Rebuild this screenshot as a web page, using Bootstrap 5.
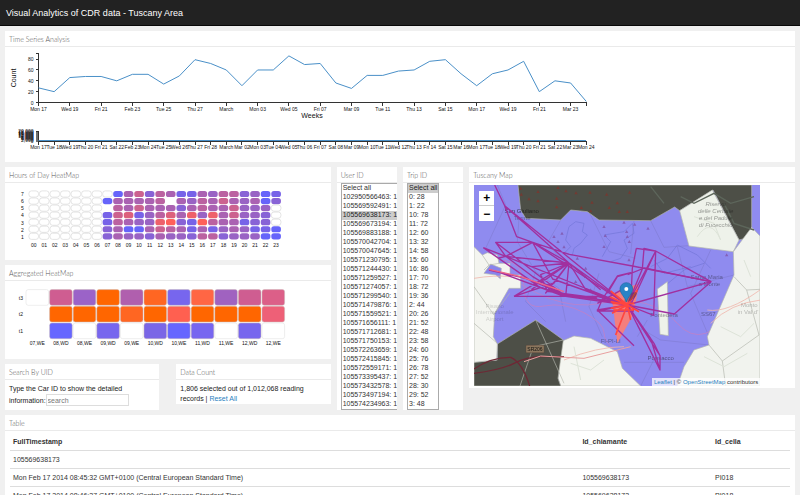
<!DOCTYPE html>
<html lang="en">
<head>
<meta charset="utf-8">
<meta name="viewport" content="width=device-width, initial-scale=1">
<title>Visual Analytics of CDR data - Tuscany Area</title>
<link href="https://cdn.jsdelivr.net/npm/bootstrap@5.3.0/dist/css/bootstrap.min.css" rel="stylesheet">
<style>
  html { scrollbar-width: none; }
  body { font: 7px/9px "Liberation Sans", Arial, sans-serif; color: #333; background: #f0f0f0; }
  .topbar { background: #222; border-bottom: 1px solid #080808; height: 26px; padding: 0 6px; }
  .topbar h1 { font-size: 9px; line-height: 12px; color: #fff; }
  .page { padding: 5px 5px 0; }
  .page .row { --bs-gutter-x: 6px; }
  .stack { gap: 5px; }
  .pair { gap: 17px; }
  .panel { background: #fff; }
  .panel > h2 { font: 300 7px/15px Lato, "Liberation Sans", sans-serif; color: #555; border-bottom: 1px solid #eaeaea; padding: 1px 4px 0; margin: 0; height: 16px; white-space: nowrap; }
  .panel-text { padding: 4px 4px 0; line-height: 10px; color: #222; }
  .panel svg { display: block; max-width: 100%; }
  svg text { font-family: "Liberation Sans", Arial, sans-serif; fill: #111; }
  .axis { fill: none; stroke: #333; stroke-width: 1; shape-rendering: crispEdges; }
  .tiny { font-size: 5px; }
  .pick { overflow: hidden; padding: 0 0 0 4px; }
  .pick select { display: block; font: inherit; color: #333; border: 1px solid #aaa; background: #fff; padding: 0; overflow: hidden; border-radius: 0; height: auto; scrollbar-width: none; }
  .pick option { padding: 0 1px; line-height: 9px; min-height: 9px; }
  .pick option.chosen { background: #ccc; color: #222; }
  #users { width: 66px; }
  #trips { width: 32px; }
  #uid { font: inherit; line-height: 9px; height: 12px; width: 83px; padding: 0 1px; border: 1px solid #ddd; background: #fff; border-radius: 0; }
  #uid::placeholder { color: #777; opacity: 1; }
  a { color: #2a7fc0; text-decoration: none; }
  .map-box { position: relative; width: 286px; max-width: 100%; margin: 2px 5px; }
  .zoomer { position: absolute; left: 5px; top: 6px; width: 15px; background: #fff; border-radius: 1px; overflow: hidden; }
  .zoomer button { display: block; width: 15px; height: 15px; border: 0; border-bottom: 1px solid #ccc; background: #fff; padding: 0; color: #000; font: bold 12px/14px "Liberation Sans", sans-serif; }
  .zoomer button:last-child { border-bottom: 0; }
  .credit { position: absolute; right: 0; bottom: 0; font-size: 6px; line-height: 8px; padding: 0 2px; background: rgba(255,255,255,.75); white-space: nowrap; }
  .table-wrap { padding: 0 5px; }
  .records { font-size: 7px; margin: 0; color: #333; --bs-table-bg: #fff; }
  .records > :not(caption) > * > * { padding: 4px 3px; line-height: 9px; border-bottom: 1px solid #ddd; color: #333; }
  .records > thead > tr > th { padding-top: 6px; }
  .c-time { width: 73%; }
  .c-id { width: 17%; }
</style>
</head>
<body>
<header class="topbar d-flex align-items-center"><h1 class="m-0 fw-normal">Visual Analytics of CDR data - Tuscany Area</h1></header>
<main class="container-fluid page d-flex flex-column stack">
  <section class="panel">
    <h2>Time Series Analysis</h2>
    <svg id="series" viewBox="5 47 600 115" width="600" height="115" role="img" aria-label="Readings per day"></svg>
  </section>

  <div class="row">
    <div class="col-5 d-flex flex-column stack">
      <section class="panel">
        <h2>Hours of Day HeatMap</h2>
        <svg id="hours" viewBox="5 183 300 77" width="300" height="77" role="img" aria-label="Readings per hour and weekday"></svg>
      </section>
      <section class="panel">
        <h2>Aggregated HeatMap</h2>
        <svg id="agg" viewBox="5 281 300 78" width="300" height="78" role="img" aria-label="Aggregated readings"></svg>
      </section>
      <div class="d-flex pair align-items-start">
        <section class="panel flex-fill w-50 pb-1">
          <h2>Search By UID</h2>
          <div class="panel-text"><label for="uid" class="d-inline">Type the Car ID to show the detailed information:</label><input id="uid" type="text" placeholder="search"></div>
        </section>
        <section class="panel flex-fill w-50">
          <h2>Data Count</h2>
          <div class="panel-text">1,806 selected out of 1,012,068 reading records | <a href="#">Reset All</a></div>
        </section>
      </div>
    </div>
    <div class="col-1">
      <section class="panel">
        <h2><label for="users">User ID</label></h2>
        <div class="pick"><select id="users" multiple size="25"></select></div>
      </section>
    </div>
    <div class="col-1">
      <section class="panel">
        <h2><label for="trips">Trip ID</label></h2>
        <div class="pick"><select id="trips" multiple size="25"></select></div>
      </section>
    </div>
    <div class="col-5">
      <section class="panel">
        <h2>Tuscany Map</h2>
        <div class="d-flex">
        <div class="map-box">
          <svg viewBox="30 75 858 603" width="286" height="201" role="img" aria-label="Map of trips near Pontedera">
            <rect x="30" y="75" width="858" height="603" fill="#8f8bef"/>
            <g fill="none" stroke="#7476d8" stroke-width="3" opacity=".7">
              <path d="M300 280l20-20-15-20 10-40 20-15 25 5-5 25 15 10-20 25-20 15-5 20zM415 290l25-45-20-20 60-10 25-25 5 30-30 20 10 25-20 30-30 10M560 320l50-25 30-40 60 30 40 40M600 380l60-50 60-20M570 300l30 40 80-20"/>
            </g>
            <g fill="none" stroke="#7774c4" stroke-width="1.5" opacity=".8">
              <path d="M100 75l25 60-60 130M165 175l-5 70 55 90-30 90 60 60M215 335l70 50 20 100M290 180l-40 70 60 70M375 155l60 120 80 20M405 340l-30 100 40 90M510 182l-10 100M560 182l40 80 75-5M640 260l30 120 140-35M740 270l-60 130 55 130M520 500l70 40 145 15M480 607h180M530 678l40-80M550 480l-30 50"/>
            </g>
            <g fill="none" stroke="#b783cf" stroke-width="3"><path d="M120 300q60 10 60 80t60 58 120 20 60 60 40 60M90 310q170 150 320 120t230 60 180-60"/></g>
            <g stroke="#b3b6ad" stroke-width="2">
              <path fill="#4d4f47" d="M162 75l8 75 15 25 105 5 30-30 50 5 35 25 155 2 72-41 15 11 100-62 78 150 38-10V75z"/>
              <path fill="#eef2ea" d="M647 152l98-62 80 150-17 35-133-17z"/>
              <path fill="#f1f3ee" d="M808 275l55-73 25 26v450H640l20-58 30-50 45-15-5-25 80-185z"/>
              <path fill="#f4f5f0" d="M290 545l40-17 50 7 80 40 15 50 55 53H290l-8-23z"/>
              <path fill="#4d4f47" d="M30 607l70-7v-48l115-72 83 60-16 115 8 23H30z"/>
              <path fill="#f4f5f0" d="M30 260l25 25 15-7 30 7 5 25h33v35h32v40h-35l-43 75-4 70 12 22-2 48-68 7z"/>
              <path fill="#8884ec" d="M60 340l20-28 32 13-3 31-14-11z"/>
              <path fill="#eef2ea" d="M580 387l30-22 3 162-25-4z"/>
              <path fill="none" d="M55 285l20 30 30-5M75 315l-15 15M30 380l60 85M92 460l45-60M30 490l70 60M810 350l38 40 40-2M848 390l37 135-110 78-40-48M775 603l10 75M215 480l85 190M298 540l-90 20-40 118"/>
            </g>
            <g fill="none" stroke="#f0b5ab" stroke-width="3" opacity=".8"><path d="M30 355q60-10 110-5M300 600q100-40 180-40M730 450q60 10 158-60M740 490q60-60 150-70"/></g>
            <g fill="none" stroke="#dde3d8" stroke-width="3"><path d="M690 170l60 20 20 50M700 230q40-60 70 10M320 610l60 20 40-30M330 560l20 100M770 500l60 30 40-40M720 590l60 30 70-40M840 300l20 50"/></g>
            <g fill="none" stroke="#5d665b" stroke-width="4"><path d="M650 110l40 20 60-30 50 30 70-20M780 130l30 60 60 20M560 80l40 50"/></g>
            <g fill="none" stroke="#6e2835" stroke-width="4"><path d="M30 640q80-10 120-30t80-20 70 0M30 627q50-35 110-35 35 15 57 86"/></g>
            <path fill="none" stroke="#e8a0a0" stroke-width="3" d="M180 605l50-17 130 7 140-35"/>
            <path id="trees" fill="#743a32"/>
            <path id="dots" fill="#8360b8"/>
            <g font-size="18" text-anchor="middle" opacity=".7">
              <g style="font-style:italic" opacity=".6"><text x="755" y="137">Riserva</text><text x="755" y="159">delle Cerbaie</text><text x="755" y="180">e del Padule</text><text x="755" y="202">di Fucecchio</text></g>
              <text x="173" y="160">San Giuliano</text><text x="175" y="181" opacity=".6">Terme</text>
              <text x="728" y="357" opacity=".6">Santa Maria</text><text x="736" y="378" opacity=".6">a Monte</text>
              <text x="733" y="468" opacity=".6">SS67</text><text x="600" y="472" opacity=".6">Pontedera</text>
              <text x="590" y="600" opacity=".7">Ponsacco</text><text x="440" y="549" opacity=".6">FI-PI-LI</text>
              <text x="856" y="440" opacity=".4">Monto</text><text x="852" y="461" opacity=".4">in Val d'</text>
              <g opacity=".25"><text x="92" y="445">Pisano</text><text x="92" y="463">Internazionale</text><text x="92" y="482">Airport</text></g>
            </g>
            <rect x="186" y="556" width="54" height="22" rx="2" fill="#8b765d" stroke="#5b3c32"/><text x="213" y="573" font-size="15" text-anchor="middle">SR206</text>
            <path fill="#ff7c70" fill-opacity=".9" d="M443 403l37-18 43-13-2 25-15 70-46 83z"/>
            <g fill="none" stroke="#a1309f" stroke-width="4" stroke-linejoin="round">
              <path d="M92 75l30 62 368 298M122 137l36 93 48 17L95 247l30 42 190 20-193-172 193 172 175 126M58 263l67 26 365 146M125 289l365 146M125 289l80 60 100 60 185 26M125 289l81-42 109 62-10 100M206 247l60 110 220 78M315 309l-70 90 70-90 50 80 125 46M315 309l-85 35 20 50 150 20M58 263l172 120 80 20 180 30M95 247l210 162M315 309l-113 80M150 409l165-100M150 409l120-40 45-60M125 289l-20 5M75 330l110 25 120 50 185 25M108 338l190 70M150 409l250 0 90 26M205 320l110-11 95 80M206 247l110 36 189 35 236 47"/>
              <path d="M206 247l284 188M500 338l-40 10-45 70-15 35 90-18M430 400l30-50 42-12M400 453l110 0M490 435L400 450l110 107M490 435l45-108 5-62 33 8M517 265l58 8-75 162M517 265l-12 60-5 110M575 273l-6 193-79-31M575 273l166 92-251 70M575 273l-85 162M541 324l200 41-110 97-141-27M541 324l-50 20M741 365l-110 97M490 435l98 195v-43l-98-152M490 435l70 100 28 95-70-140M490 435l80 115 18 37M490 435l79 31M400 430l90-50"/>
            </g>
            <g fill="none" stroke="#ff453f" stroke-width="5">
              <path d="M490 435l-50-42M490 435l-52-24M490 435l-50-10M490 435l-50 10M490 435l-46 25M490 435l10 45M490 435l-35 90M490 435l30-45M490 435l35 20M445 430h65M448 450h62"/>
            </g>
            <path fill="none" stroke="#ee6788" stroke-width="4" d="M75 328l95 22 130 45"/>
            <ellipse cx="500" cy="411" rx="22" ry="9" fill="#333" opacity=".35" transform="rotate(-35 500 411)"/>
            <path fill="#2a83c6" stroke="#216ba5" stroke-width="2" d="M487 426c-4-15-19-25-19-39a19 19 0 0 1 38 0c0 14-15 24-19 39z"/>
            <circle cx="487" cy="387" r="6" fill="#fff"/>
          </svg>
          <div class="zoomer"><button type="button" aria-label="Zoom in">+</button><button type="button" aria-label="Zoom out">−</button></div>
          <div class="credit"><a href="#">Leaflet</a> | © <a href="#">OpenStreetMap</a> contributors</div>
        </div>
        </div>
      </section>
    </div>
  </div>

  <section class="panel">
    <h2>Table</h2>
    <div class="table-wrap">
      <table class="table records">
        <thead><tr><th class="c-time">FullTimestamp</th><th class="c-id">Id_chiamante</th><th>Id_cella</th></tr></thead>
        <tbody>
          <tr><td colspan="3">105569638173</td></tr>
          <tr><td>Mon Feb 17 2014 08:45:32 GMT+0100 (Central European Standard Time)</td><td>105569638173</td><td>PI018</td></tr>
          <tr><td>Mon Feb 17 2014 08:46:27 GMT+0100 (Central European Standard Time)</td><td>105569638173</td><td>PI018</td></tr>
        </tbody>
      </table>
    </div>
  </section>
</main>
<script src="https://cdn.jsdelivr.net/npm/bootstrap@5.3.0/dist/js/bootstrap.bundle.min.js"></script>
<script>
  const byId = id => document.getElementById(id);
  const label = (x, y, t, anchor = 'middle', cls = 'tiny') => `<text class="${cls}" x="${x}" y="${y}" text-anchor="${anchor}">${t}</text>`;

  // Daily counts, 17 February to 24 March
  const counts = [27,20,46,48,48,40,52,52,34,49,79,72,60,31,60,60,86,70,72,36,26,50,50,58,60,76,79,53,31,53,60,76,20,40,36,2];
  const names = ['Sun','Mon','Tue','Wed','Thu','Fri','Sat'];
  const days = counts.map((_, i) => {
    const d = new Date(2014, 1, 17 + i), n = String(d.getDate()).padStart(2, '0');
    if (d.getDate() === 1) return 'March';
    return (d.getDay() === 0 ? (d.getMonth() === 1 ? 'Feb' : 'Mar') : names[d.getDay()]) + ' ' + n;
  });
  const x = i => 38.5 + i * 15.65, y = v => 102.5 - v * 0.542;
  let s = `<path class="axis" d="M35.5 53.5H38.5V102.5H586.5V105.5M35.5 131.5H38.5V141.5H586.5V144.5"/>`;
  for (let v = 0; v <= 80; v += 20) s += `<path class="axis" d="M35.5 ${Math.floor(y(v)) + .5}h3"/>` + label(33.5, y(v) + 2, v, 'end');
  for (let v = 0; v <= 10; v++) s += `<path class="axis" stroke-opacity=".7" d="M35.5 ${141.5 - v}h3"/>` + label(33.5, 143 - v, v ? (v * 2) + ',000' : 0, 'end');
  days.forEach((d, i) => {
    if (i % 2 === 0) s += `<path class="axis" d="M${x(i)} 102.5v3"/>` + label(x(i), 111, d);
    s += `<path class="axis" d="M${x(i)} 141.5v3"/>` + label(x(i), 149, d);
  });
  s += `<polyline fill="none" stroke="#4a90c8" stroke-width="1" points="${counts.map((v, i) => x(i) + ',' + y(v)).join(' ')}"/>`;
  s += `<path stroke="#4a90c8" d="M38.5 140.5H586"/>`;
  s += `<text font-size="7" x="312" y="118" text-anchor="middle">Weeks</text><text font-size="7" text-anchor="middle" transform="translate(16 78) rotate(-90)">Count</text>`;
  byId('series').innerHTML = s;

  // Weekday rows 7..1, hours 07..23; a dot is an empty cell, a blank is a missing one
  const grid = [
    '.0462541143552301',
    '044445 4354643402',
    ' 546444245446333.',
    '1671357483846332.',
    '1543389219544122.',
    '24004654141343110',
    '24332433255233300'];
  const tint = n => { const t = n / 9; return `rgb(${102 + 153 * t | 0},${100 - 3 * t | 0},${250 - 160 * t | 0})`; };
  s = '';
  grid.forEach((row, r) => {
    const cy = 194 + r * 7.05, cells = '.'.repeat(7) + row;
    s += label(22.5, cy + 2.3, 7 - r);
    [...cells].forEach((c, i) => {
      if (c === ' ') return;
      s += `<rect x="${28.9 + i * 10.54}" y="${cy - 3.1}" width="9.6" height="6.2" rx="2.6" fill="${c === '.' ? '#fff' : tint(+c)}" stroke="${c === '.' ? '#ddd' : 'none'}" stroke-width=".8"/>`;
    });
  });
  for (let h = 0; h < 24; h++) s += label(33.7 + h * 10.54, 246.5, String(h).padStart(2, '0'));
  byId('hours').innerHTML = s;

  const O = '#ff6600', E = '#fff';
  const agg = [
    [E,'#cf5d91','#9b63c8',O,'#b05fae','#ff6622','#7766ee','#ff6644','#a062c0','#cf5d91','#dc5f88'],
    [0,O,O,O,'#ff6622',O,'#ff6050',O,O,O,'#ee6077'],
    [0,'#6666ff',E,'#7766ee',E,'#7a66e6','#6666ff','#7766f0',E,'#7766ee',E]];
  s = '';
  agg.forEach((row, r) => {
    s += label(23, 299.5 + r * 16.7, 't' + (3 - r), 'end');
    row.forEach((c, i) => { if (c) s += `<rect x="${26 + i * 23.6}" y="${289.6 + r * 16.7}" width="22.6" height="15.7" rx="2.2" fill="${c}" stroke="${c === E ? '#ddd' : '#cbb'}" stroke-width=".5"/>`; });
  });
  ['07,WE','08,WD','08,WE','09,WD','09,WE','10,WD','10,WE','11,WD','11,WE','12,WD','12,WE'].forEach((t, i) => s += label(37.3 + i * 23.6, 345, t));
  byId('agg').innerHTML = s;

  const fill = (id, items, chosen) => byId(id).innerHTML = items.map((t, i) => `<option${i === chosen ? ' class="chosen"' : ''}>${t}</option>`).join('');
  const users = '102950566463 105569592491 105569638173 105569673194 105569883188 105570042704 105570047645 105571230795 105571244430 105571259527 105571274057 105571299540 105571479876 105571559521 105571656111 105571712681 105571750153 105572263659 105572415845 105572559171 105573395437 105573432578 105573497194 105574234963'.split(' ');
  fill('users', ['Select all', ...users.map(u => u + ': 1')], 3);
  fill('trips', 'Select all|0: 28|1: 22|10: 78|11: 72|12: 60|13: 32|14: 58|15: 60|16: 86|17: 70|18: 72|19: 36|2: 44|20: 26|21: 52|22: 48|23: 58|24: 60|25: 76|26: 78|27: 52|28: 30|29: 52|3: 48'.split('|'), 0);

  const marks = pts => pts.map(([a, b]) => `M${a} ${b}l5 9h-10z`).join('');
  byId('trees').setAttribute('d', marks([[170,80],[172,98],[222,90],[195,112],[222,118],[282,78],[306,88],[278,110],[278,136],[336,94],[378,92],[384,122],[428,98],[460,124],[436,138],[380,148],[466,150],[490,150],[352,138],[497,92]]));
  byId('dots').setAttribute('d', marks([[294,215],[270,225],[282,240],[420,195],[424,222],[300,256],[488,210],[480,182],[496,240],[420,255],[365,320],[365,345],[400,372],[335,360],[340,290],[512,188],[552,200],[490,225],[495,295],[788,280],[380,385]]));
</script>
</body>
</html>
